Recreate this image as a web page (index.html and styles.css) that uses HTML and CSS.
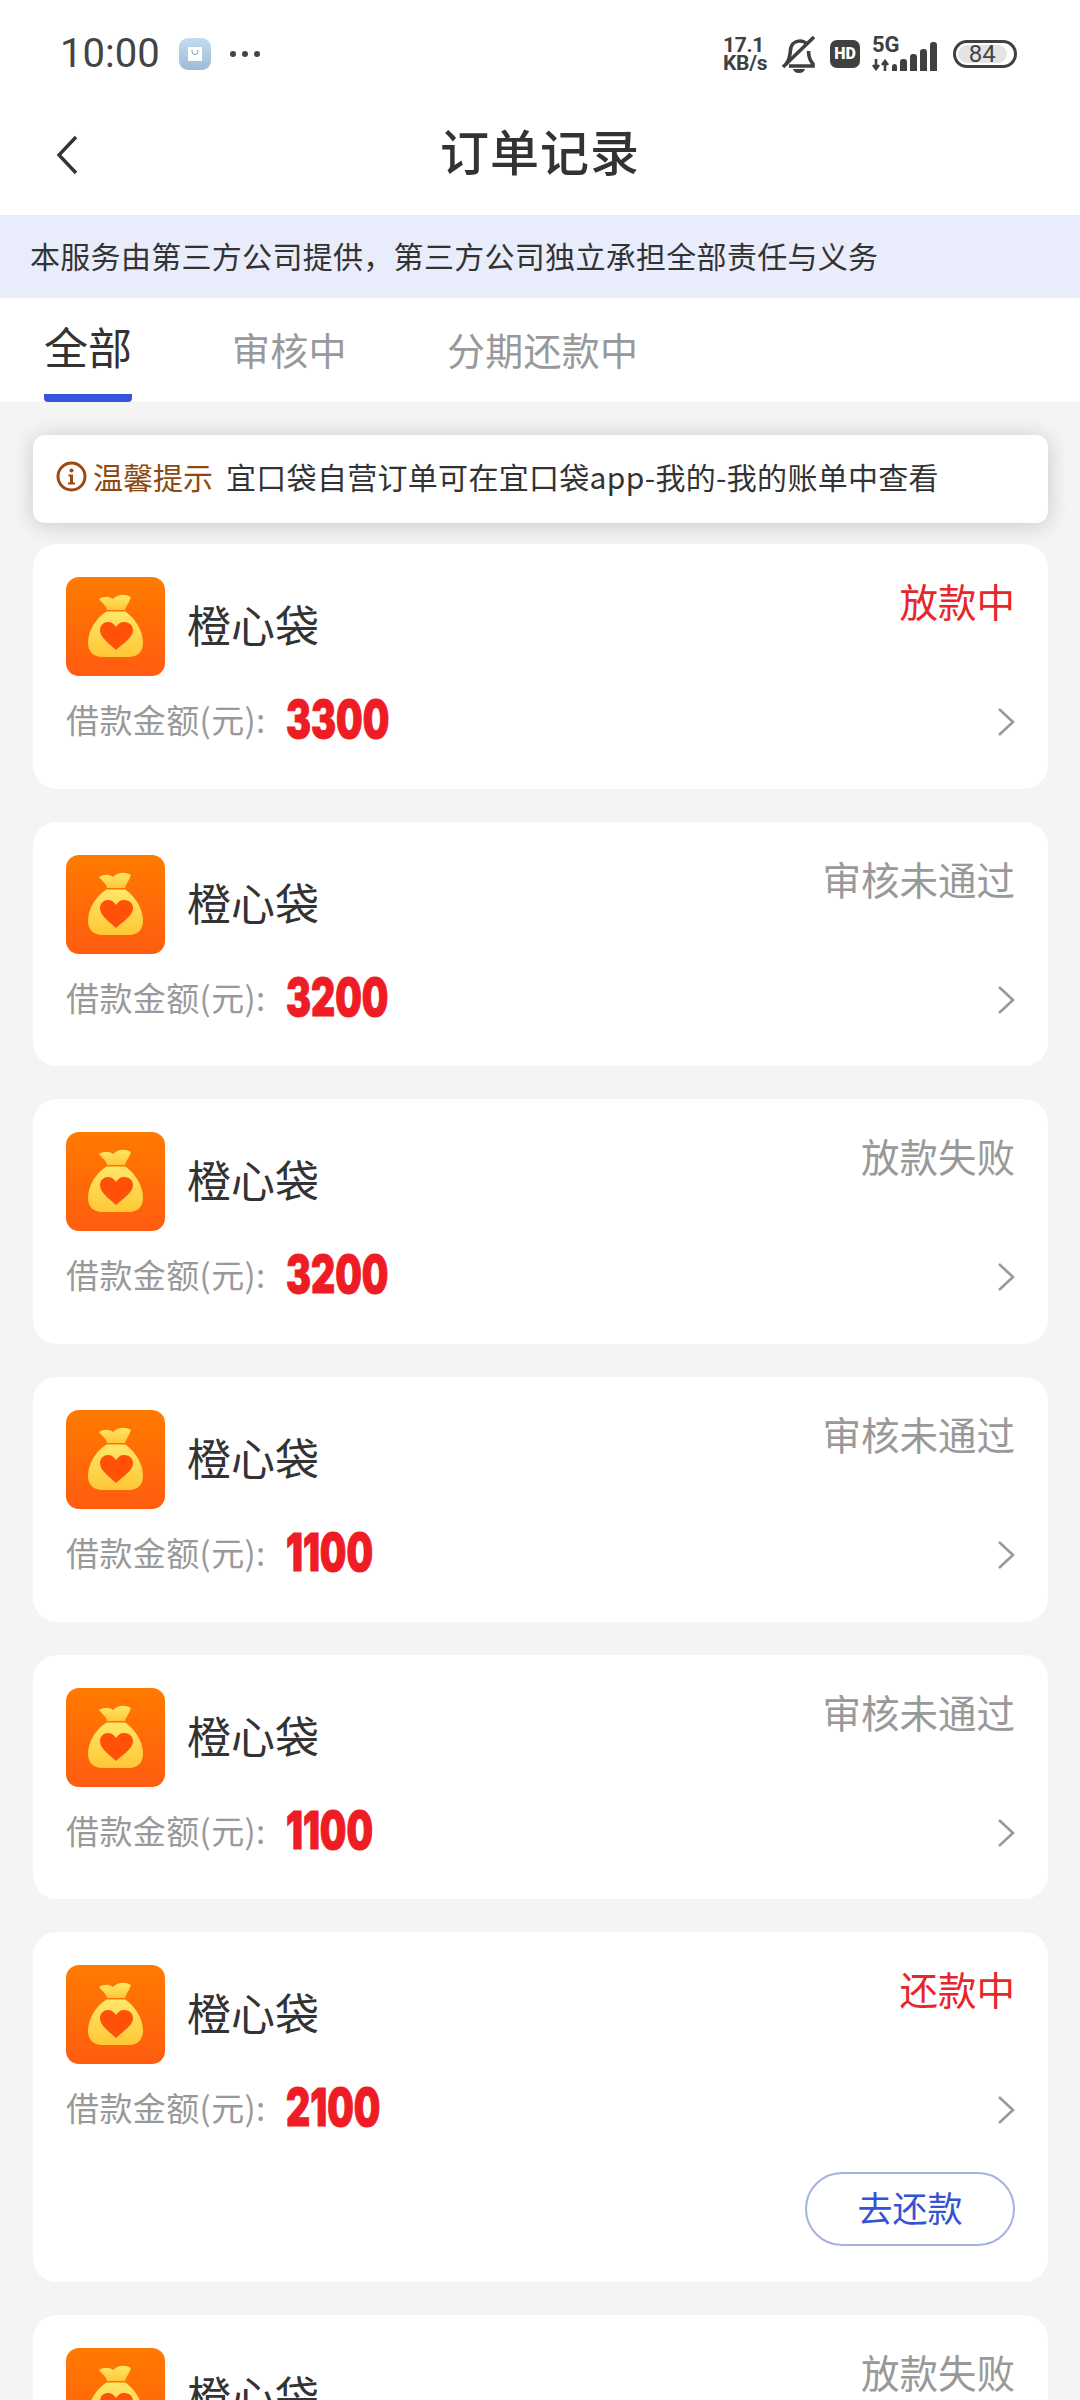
FILE: index.html
```html
<!DOCTYPE html>
<html lang="zh-CN">
<head>
  <meta charset="UTF-8">
  <title>订单记录</title>
  <link rel="stylesheet" href="styles.css">
</head>
<body>
<svg class="defs" width="0" height="0">
  <defs>
    <linearGradient id="logoBg" x1="0" y1="0" x2="0" y2="1">
      <stop offset="0" stop-color="#ff7b00"/>
      <stop offset="1" stop-color="#ff5c10"/>
    </linearGradient>
    <linearGradient id="bagBg" x1="0" y1="0" x2="0" y2="1">
      <stop offset="0" stop-color="#ffe768"/>
      <stop offset="1" stop-color="#ffc736"/>
    </linearGradient>
    <symbol id="logo" viewBox="0 0 99 99">
      <rect width="99" height="99" rx="13" fill="url(#logoBg)"/>
      <path d="M33 22C38 19 43 19 47 22 51 18 58 16 65 20 63 26 60 29 59 33H41C40 28 36 26 33 22z" fill="url(#bagBg)"/>
      <path d="M41 34.500H59C64 37 77 50 77 66 77 75 71 80 63 80H36C28 80 22 75 22 66 22 50 35 37 41 34.500z" fill="url(#bagBg)"/>
      <path d="M50 73C44 67 34 61 34 53c0-5 4-8 8-8 4 0 6 2 8 5 2-3 4-5 8-5 5 0 9 3 9 8 0 8-11 14-17 20z" fill="#ff5208"/>
    </symbol>
    <symbol id="chev" viewBox="0 0 18 30">
      <path d="M2 2l14 13L2 28" fill="none" stroke="#999" stroke-width="2.6"/>
    </symbol>
  </defs>
</svg>

<div class="top">
  <div class="statusbar">
    <div class="sb-left">
      <span class="time">10:00</span>
      <span class="appicon"><svg width="14" height="14" viewBox="0 0 14 14"><rect x="0" y="0" width="14" height="14" fill="#fff"/><path d="M4 3c0 6 6 6 6 0" fill="none" stroke="#8fa9c4" stroke-width="1.2"/></svg></span>
      <span class="dots"><i></i><i></i><i></i></span>
    </div>
    <div class="sb-right">
      <span class="speed">17.1<br>KB/s</span>
      <svg class="bell" width="36" height="38" viewBox="0 0 36 38">
        <path d="M5 29c3-3 4-8 4.500-14C10 9 14 6 19 6c3 0 5 1 7 3M27.500 16c0 5 1 9 4.500 13v2H8" fill="none" stroke="#404040" stroke-width="3.6"/>
        <path d="M2 32L33 2" stroke="#404040" stroke-width="3.600"/>
        <path d="M12 34h12c-1 3-3 4-6 4s-5-1-6-4z" fill="#404040"/>
      </svg>
      <span class="hd">HD</span>
      <span class="net">
        <span class="fiveg">5G</span>
        <svg width="18" height="12" viewBox="0 0 18 12"><path d="M4 0v9M1 6l3 4 3-4M13 12V3M10 6l3-4 3 4" fill="none" stroke="#404040" stroke-width="2.600"/></svg>
      </span>
      <span class="bars"><i class="b1"></i><i class="b2"></i><i class="b3"></i><i class="b4"></i><i class="b5"></i></span>
      <span class="batt"><span>84</span></span>
    </div>
  </div>

  <div class="navbar">
    <svg class="back" width="24" height="40" viewBox="0 0 24 40"><path d="M21 2L4 20l17 18" fill="none" stroke="#333" stroke-width="3.4"/></svg>
    <h1>订单记录</h1>
  </div>

  <div class="notice">本服务由第三方公司提供，第三方公司独立承担全部责任与义务</div>

  <div class="tabs">
    <span class="tab on">全部</span>
    <span class="tab">审核中</span>
    <span class="tab">分期还款中</span>
  </div>
</div>

<div class="list">
  <div class="hint">
    <svg width="31" height="31" viewBox="0 0 31 31"><circle cx="15.5" cy="15.5" r="13.5" fill="none" stroke="#9c4a12" stroke-width="3"/><circle cx="15.5" cy="9.5" r="2" fill="#9c4a12"/><path d="M12.5 13.5h4.5v8h2v2h-7v-2h2v-6h-1.500z" fill="#9c4a12"/></svg>
    <span class="hint-tag">温馨提示</span>
    <span class="hint-text">宜口袋自营订单可在宜口袋app-我的-我的账单中查看</span>
  </div>

  <div class="card">
    <div class="head">
      <svg class="logo"><use href="#logo"/></svg>
      <span class="name">橙心袋</span>
      <span class="state red">放款中</span>
    </div>
    <div class="loan">
      <span class="label">借款金额(元):</span>
      <span class="amount">3300</span>
      <svg class="chev"><use href="#chev"/></svg>
    </div>
  </div>

  <div class="card">
    <div class="head">
      <svg class="logo"><use href="#logo"/></svg>
      <span class="name">橙心袋</span>
      <span class="state">审核未通过</span>
    </div>
    <div class="loan">
      <span class="label">借款金额(元):</span>
      <span class="amount">3200</span>
      <svg class="chev"><use href="#chev"/></svg>
    </div>
  </div>

  <div class="card">
    <div class="head">
      <svg class="logo"><use href="#logo"/></svg>
      <span class="name">橙心袋</span>
      <span class="state">放款失败</span>
    </div>
    <div class="loan">
      <span class="label">借款金额(元):</span>
      <span class="amount">3200</span>
      <svg class="chev"><use href="#chev"/></svg>
    </div>
  </div>

  <div class="card">
    <div class="head">
      <svg class="logo"><use href="#logo"/></svg>
      <span class="name">橙心袋</span>
      <span class="state">审核未通过</span>
    </div>
    <div class="loan">
      <span class="label">借款金额(元):</span>
      <span class="amount">1100</span>
      <svg class="chev"><use href="#chev"/></svg>
    </div>
  </div>

  <div class="card">
    <div class="head">
      <svg class="logo"><use href="#logo"/></svg>
      <span class="name">橙心袋</span>
      <span class="state">审核未通过</span>
    </div>
    <div class="loan">
      <span class="label">借款金额(元):</span>
      <span class="amount">1100</span>
      <svg class="chev"><use href="#chev"/></svg>
    </div>
  </div>

  <div class="card has-btn">
    <div class="head">
      <svg class="logo"><use href="#logo"/></svg>
      <span class="name">橙心袋</span>
      <span class="state red">还款中</span>
    </div>
    <div class="loan">
      <span class="label">借款金额(元):</span>
      <span class="amount">2100</span>
      <svg class="chev"><use href="#chev"/></svg>
    </div>
    <div class="actions"><span class="btn">去还款</span></div>
  </div>

  <div class="card">
    <div class="head">
      <svg class="logo"><use href="#logo"/></svg>
      <span class="name">橙心袋</span>
      <span class="state">放款失败</span>
    </div>
    <div class="loan">
      <span class="label">借款金额(元):</span>
      <span class="amount">3200</span>
      <svg class="chev"><use href="#chev"/></svg>
    </div>
  </div>
</div>
</body>
</html>
```

FILE: styles.css
```css
* {
  margin: 0;
  padding: 0;
  box-sizing: border-box;
}

html, body {
  width: 1080px;
  height: 2400px;
  overflow: hidden;
}

body {
  background: #f4f4f4;
  color: #333;
  font-family: "Noto Sans CJK SC", "Noto Sans", sans-serif;
}

.defs {
  display: block;
  height: 0;
}

.top {
  background: #fff;
}

/* status bar */
.statusbar {
  height: 108px;
  padding: 36px 63px 0 60px;
  display: flex;
  justify-content: space-between;
  align-items: flex-start;
  color: #444;
}

.sb-left, .sb-right {
  display: flex;
  align-items: center;
  height: 36px;
}

.time {
  font-family: Roboto, sans-serif;
  font-size: 40px;
  line-height: 36px;
  width: 119px;
}

.appicon {
  width: 32px;
  height: 32px;
  border-radius: 9px;
  background: linear-gradient(#c4dcf2, #9dbad8);
  display: flex;
  align-items: center;
  justify-content: center;
}

.dots {
  display: flex;
  gap: 6px;
  margin-left: 19px;
}

.dots i {
  width: 6px;
  height: 6px;
  border-radius: 50%;
  background: #444;
}

.speed {
  font-family: Roboto, sans-serif;
  font-weight: 700;
  font-size: 21px;
  line-height: 18px;
  letter-spacing: -0.3px;
  width: 58px;
  color: #404040;
}

.bell {
  margin-right: 13px;
}

.hd {
  width: 30px;
  height: 28px;
  border-radius: 7px;
  background: #404040;
  color: #fff;
  font-family: Roboto, sans-serif;
  font-weight: 900;
  font-size: 16px;
  line-height: 28px;
  text-align: center;
}

.net {
  margin-left: 12px;
  width: 20px;
  display: flex;
  flex-direction: column;
  gap: 6px;
}

.fiveg {
  font-family: Roboto, sans-serif;
  font-weight: 700;
  font-size: 22px;
  line-height: 16px;
  white-space: nowrap;
  color: #404040;
}

.bars {
  display: flex;
  align-items: flex-end;
  gap: 3px;
  height: 30px;
  margin-top: 3px;
}

.bars i {
  width: 7px;
  background: #404040;
  border-radius: 3px 3px 0 0;
}

.bars .b1 { height: 7px; width: 5px; }
.bars .b2 { height: 12px; }
.bars .b3 { height: 17px; }
.bars .b4 { height: 22px; }
.bars .b5 { height: 29px; }

.batt {
  margin-left: 16px;
  width: 64px;
  height: 28px;
  border: 3px solid #404040;
  border-radius: 14px;
  padding: 2px;
}

.batt span {
  display: block;
  height: 100%;
  width: 90%;
  border-radius: 9px;
  background: #e4e4e4;
  font-family: Roboto, sans-serif;
  font-size: 24px;
  line-height: 18px;
  text-align: center;
}

/* nav */
.navbar {
  height: 107px;
  position: relative;
  display: flex;
  align-items: center;
  justify-content: center;
  padding-bottom: 24px;
}

.back {
  position: absolute;
  left: 55px;
  top: 27px;
}

.navbar h1 {
  font-size: 49px;
  font-weight: 500;
  letter-spacing: 1px;
  line-height: 60px;
}

.notice {
  height: 83px;
  background: #e9edfb;
  padding-left: 30px;
  font-size: 30px;
  letter-spacing: 0.3px;
  line-height: 81px;
}

.tabs {
  height: 104px;
  padding-left: 44px;
  display: flex;
  gap: 100px;
  position: relative;
}

.tab {
  font-size: 38px;
  color: #999;
  line-height: 102px;
  letter-spacing: 0.3px;
  height: 104px;
}

.tab.on {
  font-size: 44px;
  color: #333;
  line-height: 96px;
  border-bottom: 8px solid #3553df;
  border-radius: 0 0 4px 4px;
  letter-spacing: 0;
  width: 88px;
  text-align: center;
}

/* list */
.list {
  padding: 33px 32px 0 33px;
  display: flex;
  flex-direction: column;
  gap: 33px;
}

.hint {
  height: 88px;
  margin-bottom: -12px;
  background: #fff;
  border-radius: 12px;
  box-shadow: 0 2px 22px rgba(0, 0, 0, 0.18);
  padding: 0 0 6px 23px;
  display: flex;
  align-items: center;
  font-size: 30px;
}

.hint-tag {
  color: #8c4a12;
  margin-left: 6px;
  width: 133px;
}

.hint-text {
  letter-spacing: 0.3px;
}

.card {
  background: #fff;
  border-radius: 24px;
  padding: 33px 33px 44px;
  height: 244.7px;
}

.card.has-btn {
  height: 349.5px;
}

.head {
  display: flex;
  align-items: center;
  height: 99px;
}

.logo {
  width: 99px;
  height: 99px;
  flex: none;
}

.name {
  font-size: 44px;
  margin-left: 22px;
  margin-top: -5px;
}

.state {
  margin-left: auto;
  align-self: flex-start;
  font-size: 38.5px;
  line-height: 46px;
  color: #999;
}

.state.red {
  color: #e8262a;
}

.loan {
  display: flex;
  align-items: center;
  height: 48px;
  margin-top: 20px;
}

.label {
  font-size: 33px;
  letter-spacing: 0.4px;
  color: #999;
  width: 220px;
  white-space: nowrap;
  padding-bottom: 2px;
}

.amount {
  display: inline-block;
  font-family: Inter, Roboto, sans-serif;
  font-weight: 900;
  font-size: 52px;
  line-height: 48px;
  color: #ee1c25;
  -webkit-text-stroke: 1px #ee1c25;
  transform: scaleX(0.72);
  transform-origin: left center;
}

.chev {
  width: 18px;
  height: 30px;
  margin-left: auto;
  margin-top: 4px;
}

.actions {
  display: flex;
  justify-content: flex-end;
  margin-top: 40px;
}

.btn {
  width: 210px;
  height: 74px;
  border: 2px solid #a5b2e0;
  border-radius: 37px;
  color: #3553d0;
  font-size: 35px;
  line-height: 66px;
  text-align: center;
}
```
